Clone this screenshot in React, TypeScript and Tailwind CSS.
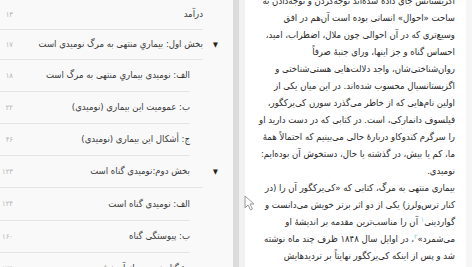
import React from 'react';

type TocRow = { title: string; page: string; sub?: boolean; arrow?: boolean; h: string; pad?: string };

const toc: TocRow[] = [
  { title: 'درآمد', page: '۱۳', h: 'h-[30px]' },
  { title: 'بخش اول: بیماریِ منتهی به مرگ نومیدی است', page: '۱۷', arrow: true, h: 'h-[30px]' },
  { title: 'الف: نومیدی بیماریِ منتهی به مرگ است', page: '۱۸', sub: true, h: 'h-[32px]' },
  { title: 'ب: عمومیت این بیماری (نومیدی)', page: '۲۲', sub: true, h: 'h-[32px]' },
  { title: 'ج: أشکال این بیماری (نومیدی)', page: '۴۶', sub: true, h: 'h-[32px]' },
  { title: 'بخش دوم:نومیدی گناه است', page: '۱۲۳', arrow: true, h: 'h-[32px]', pad: 'pr-[13px]' },
  { title: 'الف: نومیدی گناه است', page: '۱۲۴', sub: true, h: 'h-[33px]' },
  { title: 'ب: پیوستگی گناه', page: '۱۶۰', sub: true, h: 'h-[32px]' },
  { title: 'ج: گناهِ نومیدی از آمرزش', page: '۱۷۵', sub: true, h: 'h-[32px]' },
];

type Seg = string | { sup: string };

const body: Seg[][] = [
  ['اگزیستانس جای داده شده‌اند توجه‌کردن و توجه‌دادن به'],
  ['ساحت «احوال» انسانی بوده است آن‌هم در افق'],
  ['وسیع‌تری که در آن احوالی چون ملال، اضطراب، امید،'],
  ['احساس گناه و جز اینها، ورای جنبهٔ صرفاً'],
  ['روان‌شناختی‌شان، واجد دلالت‌هایی هستی‌شناختی و'],
  ['اگزیستانسیال محسوب شده‌اند. در این میان یکی از'],
  ['اولین نام‌هایی که از خاطر می‌گذرد سورن کی‌یرکگور،'],
  ['فیلسوف دانمارکی، است. در کتابی که در دست دارید او'],
  ['را سرگرم کندوکاو دربارهٔ حالی می‌بینیم که احتمالاً همهٔ'],
  ['ما، کم یا بیش، در گذشته یا حال، دستخوش آن بوده‌ایم:'],
  ['نومیدی.'],
  ['بیماری منتهی به مرگ، کتابی که «کی‌یرکگور آن را (در'],
  ['کنار ترس‌ولرز) یکی از دو اثر برتر خویش می‌دانست و'],
  ['گواردینی', { sup: '۱' }, ' آن را مناسب‌ترین مقدمه بر اندیشهٔ او'],
  ['می‌شمرد»', { sup: '۲' }, '، در اوایل سال ۱۸۴۸ ظرف چند ماه نوشته'],
  ['شد و پس از اینکه کی‌یرکگور نهایتاً بر تردیدهایش'],
];

const Cursor = () => (
  <svg className="absolute left-[244px] top-[195px]" width="11" height="16" viewBox="0 0 11 16">
    <path d="M1 1 L1 13 L4 10 L6.5 15 L8.5 14 L6 9 L10 9 Z" fill="#fff" stroke="#9a9a9a" strokeWidth="1" strokeLinejoin="round" />
  </svg>
);

export default function App() {
  return (
    <div className="relative flex h-[267px] w-[472px] overflow-hidden bg-white font-['DejaVu_Sans_Condensed','DejaVu_Sans',sans-serif] [font-stretch:condensed]">
      {/* table of contents */}
      <div className="w-[233px] shrink-0 overflow-hidden bg-[#f9f9f9]">
        {toc.map((r, i) => (
          <div key={i} className={`flex ${r.h}`}>
            <div className="flex min-w-0 flex-1 items-center border-b border-[#e4e4e4]">
              <span className="w-[13px] shrink-0 whitespace-nowrap text-right text-[7.5px] text-[#b3b3b3]">{r.page}</span>
              <span dir="rtl" className={`flex-1 whitespace-nowrap text-right text-[9.5px] text-[#3a3a3a] ${r.pad ?? ''}`}>
                {r.title}
              </span>
            </div>
            {r.sub ? (
              <div className="w-[43px] shrink-0" />
            ) : (
              <div className="flex w-[30px] shrink-0 items-center pl-[10px] text-[7px] text-[#222]">{r.arrow ? '▼' : ''}</div>
            )}
          </div>
        ))}
      </div>

      {/* scrollbar + gutter */}
      <div className="w-[6px] shrink-0 bg-[#dcdcdc]" />
      <div className="w-[6px] shrink-0 bg-[#f1f1f1]" />

      {/* reading pane */}
      <div className="min-w-0 flex-1 overflow-hidden bg-white pl-[18px] pr-[11px]">
        <div dir="rtl" className="-mt-[8px] text-[9.5px] leading-[17px] text-[#2a2a2a]">
          {body.map((line, i) => (
            <div key={i} className="whitespace-nowrap text-right">
              {line.map((s, j) =>
                typeof s === 'string' ? (
                  <React.Fragment key={j}>{s}</React.Fragment>
                ) : (
                  <sup key={j} className="text-[7px] text-[#7fcfd6]">{s.sup}</sup>
                ),
              )}
            </div>
          ))}
        </div>
      </div>
      <div className="w-[6px] shrink-0 bg-[#f6f6f6]" />

      <Cursor />
    </div>
  );
}
